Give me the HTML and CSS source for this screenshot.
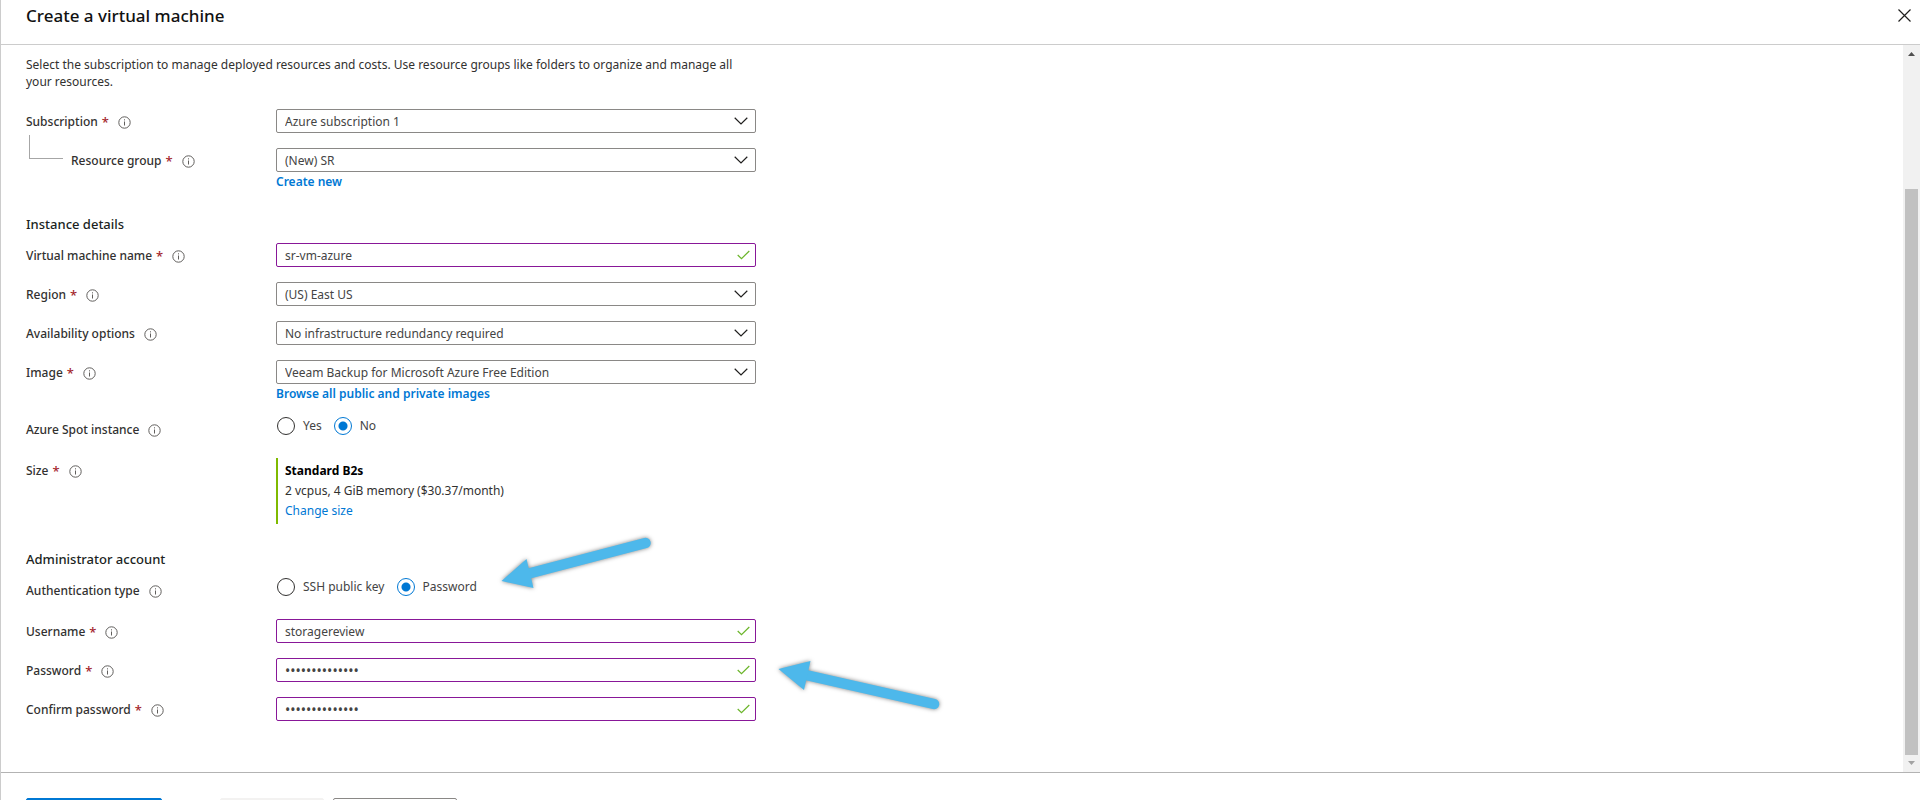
FILE: index.html
```html
<!DOCTYPE html>
<html lang="en">
<head>
<meta charset="utf-8">
<title>Create a virtual machine</title>
<link rel="stylesheet" href="styles.css">
</head>
<body>
<svg width="0" height="0" class="defs" aria-hidden="true">
  <symbol id="info" viewBox="0 0 13 13">
    <circle cx="6.500" cy="6.500" r="5.700" fill="none" stroke="#605e5c"/>
    <path d="M6.500 5.500v4M6.500 3.300v1.100" stroke="#605e5c" fill="none"/>
  </symbol>
  <symbol id="chevron" viewBox="0 0 14 8">
    <path d="M.7 .8L7 7L13.300 .8" fill="none" stroke="#201f1e" stroke-width="1.200"/>
  </symbol>
  <symbol id="tick" viewBox="0 0 13 10">
    <path d="M.7 5L4.500 8.600L12.300 1" fill="none" stroke="#6bb52a" stroke-width="1.200"/>
  </symbol>
</svg>
<div class="blade">
  <header class="header">
    <h1 class="title">Create a virtual machine</h1>
    <button class="close" type="button" aria-label="Close">
      <svg width="13" height="13" viewBox="0 0 13 13"><path d="M.5 .5l12 12M12.500 .5l-12 12" stroke="#201f1e" stroke-width="1.200"/></svg>
    </button>
  </header>

  <main class="main">
    <form class="form">
      <p class="intro">Select the subscription to manage deployed resources and costs. Use resource groups like folders to organize and manage all your resources.</p>

      <div class="group">
        <div class="row">
          <label class="label" for="subscription">Subscription<span class="req">*</span><svg class="info"><use href="#info"/></svg></label>
          <div class="field"><select class="box" id="subscription"><option>Azure subscription 1</option></select><svg class="chevron"><use href="#chevron"/></svg></div>
        </div>
        <div class="row">
          <label class="label child" for="rg">Resource group<span class="req">*</span><svg class="info"><use href="#info"/></svg></label>
          <div class="control">
            <div class="field"><select class="box" id="rg"><option>(New) SR</option></select><svg class="chevron"><use href="#chevron"/></svg></div>
            <a class="link strong" href="#">Create new</a>
          </div>
        </div>
      </div>

      <h2 class="heading">Instance details</h2>
      <div class="group">
        <div class="row">
          <label class="label" for="vm">Virtual machine name<span class="req">*</span><svg class="info"><use href="#info"/></svg></label>
          <div class="field"><input class="box edited" id="vm" type="text" value="sr-vm-azure"><svg class="tick"><use href="#tick"/></svg></div>
        </div>
        <div class="row">
          <label class="label" for="region">Region<span class="req">*</span><svg class="info"><use href="#info"/></svg></label>
          <div class="field"><select class="box" id="region"><option>(US) East US</option></select><svg class="chevron"><use href="#chevron"/></svg></div>
        </div>
        <div class="row">
          <label class="label" for="avail">Availability options<svg class="info"><use href="#info"/></svg></label>
          <div class="field"><select class="box" id="avail"><option>No infrastructure redundancy required</option></select><svg class="chevron"><use href="#chevron"/></svg></div>
        </div>
        <div class="row">
          <label class="label" for="image">Image<span class="req">*</span><svg class="info"><use href="#info"/></svg></label>
          <div class="control">
            <div class="field"><select class="box" id="image"><option>Veeam Backup for Microsoft Azure Free Edition</option></select><svg class="chevron"><use href="#chevron"/></svg></div>
            <a class="link strong" href="#">Browse all public and private images</a>
          </div>
        </div>
      </div>

      <div class="row choice spot" role="radiogroup" aria-labelledby="spot-label">
        <span class="label" id="spot-label">Azure Spot instance<svg class="info"><use href="#info"/></svg></span>
        <div class="radios">
          <label class="option"><input class="radio" type="radio" name="spot">Yes</label>
          <label class="option"><input class="radio" type="radio" name="spot" checked>No</label>
        </div>
      </div>

      <div class="row">
        <span class="label">Size<span class="req">*</span><svg class="info"><use href="#info"/></svg></span>
        <div class="size">
          <strong class="size-name">Standard B2s</strong>
          <span>2 vcpus, 4 GiB memory ($30.37/month)</span>
          <a class="link" href="#">Change size</a>
        </div>
      </div>

      <h2 class="heading admin">Administrator account</h2>
      <div class="row choice" role="radiogroup" aria-labelledby="auth-label">
        <span class="label" id="auth-label">Authentication type<svg class="info"><use href="#info"/></svg></span>
        <div class="radios">
          <label class="option"><input class="radio" type="radio" name="auth">SSH public key</label>
          <label class="option"><input class="radio" type="radio" name="auth" checked>Password</label>
        </div>
      </div>
      <div class="group">
        <div class="row">
          <label class="label" for="user">Username<span class="req">*</span><svg class="info"><use href="#info"/></svg></label>
          <div class="field"><input class="box edited" id="user" type="text" value="storagereview"><svg class="tick"><use href="#tick"/></svg></div>
        </div>
        <div class="row">
          <label class="label" for="pw">Password<span class="req">*</span><svg class="info"><use href="#info"/></svg></label>
          <div class="field"><input class="box edited secret" id="pw" type="password" value="passwordpasswo"><svg class="tick"><use href="#tick"/></svg></div>
        </div>
        <div class="row">
          <label class="label" for="pw2">Confirm password<span class="req">*</span><svg class="info"><use href="#info"/></svg></label>
          <div class="field"><input class="box edited secret" id="pw2" type="password" value="passwordpasswo"><svg class="tick"><use href="#tick"/></svg></div>
        </div>
      </div>

      <svg class="arrow arrow-auth" width="170" height="70" viewBox="492 530 170 70" aria-hidden="true">
        <path d="M529 573.500L645.500 543" stroke="#4db8eb" stroke-width="10.500" stroke-linecap="round"/>
        <path d="M501.500 581L526.500 559L533.500 588Z" fill="#4db8eb"/>
      </svg>
      <svg class="arrow arrow-pw" width="180" height="70" viewBox="769 650 180 70" aria-hidden="true">
        <path d="M808 675.500L934 704" stroke="#4db8eb" stroke-width="10.500" stroke-linecap="round"/>
        <path d="M778.500 669L810.500 661L804 690Z" fill="#4db8eb"/>
      </svg>
    </form>
    <div class="scrollbar" aria-hidden="true">
      <svg class="scroll-arrow" viewBox="0 0 17 17"><path d="M5 11L8.500 7L12 11Z" fill="#505050"/></svg>
      <div class="scroll-above"></div>
      <div class="scroll-thumb"></div>
      <svg class="scroll-arrow" viewBox="0 0 17 17"><path d="M5 6L8.500 10L12 6Z" fill="#a3a3a3"/></svg>
    </div>
  </main>

  <footer class="footer">
    <button class="btn primary" type="button" aria-label="Review and create"></button>
    <button class="btn previous" type="button" aria-label="Previous" disabled></button>
    <button class="btn next" type="button" aria-label="Next"></button>
  </footer>
</div>
</body>
</html>
```

FILE: styles.css
```css
* {
  box-sizing: border-box;
}

body {
  margin: 0;
  background: #fff;
  color: #323130;
  font-family: "Noto Sans", "Open Sans", sans-serif;
  font-size: 12px;
  line-height: 20px;
}

.defs {
  position: absolute;
}

.blade {
  display: grid;
  grid-template-rows: auto 1fr auto;
  height: 100vh;
  overflow: hidden;
  border-left: 1px solid #ccc;
}

.header {
  display: flex;
  justify-content: space-between;
  align-items: flex-start;
  padding: 4px 9px 16px 25px;
  border-bottom: 1px solid #ccc;
}

.title {
  margin: 0;
  color: #111;
  font-size: 17px;
  font-weight: 500;
  line-height: 24px;
}

.close {
  display: flex;
  padding: 5px 0;
  border: 0;
  background: none;
}

.main {
  display: flex;
  min-height: 0;
}

.form {
  position: relative;
  flex: 1;
  padding: 11px 25px 0;
  overflow: hidden;
}

.intro {
  max-width: 730px;
  margin: 0 0 19px;
  line-height: 17px;
}

.group {
  display: flex;
  flex-direction: column;
  gap: 15px;
}

.row {
  display: grid;
  grid-template-columns: 250px minmax(0, 480px);
  align-items: start;
}

.label {
  display: flex;
  align-items: center;
  height: 24px;
  padding-top: 2px;
  font-weight: 500;
}

.req {
  margin-left: 4px;
  color: #a4262c;
  font-size: 13px;
}

.info {
  width: 13px;
  height: 13px;
  margin-left: 9px;
}

.child::before {
  content: "";
  align-self: flex-start;
  flex: none;
  width: 33px;
  height: 23px;
  margin: -15px 8px 0 3px;
  border: solid #a6a6a6;
  border-width: 0 0 1px 1px;
}

.control {
  display: flex;
  flex-direction: column;
  align-items: flex-start;
}

.field {
  position: relative;
  width: 100%;
}

.box {
  display: block;
  width: 100%;
  height: 24px;
  padding: 0 32px 0 8px;
  border: 1px solid #8a8886;
  border-radius: 2px;
  background: #fff;
  color: #444;
  font: inherit;
  appearance: none;
}

select.box {
  padding-top: 1px;
}

.edited {
  border-color: #881798;
}

.secret {
  font-size: 14px;
}

.chevron,
.tick {
  position: absolute;
  pointer-events: none;
}

.chevron {
  top: 8px;
  right: 8px;
  width: 14px;
  height: 8px;
}

.tick {
  top: 7px;
  right: 6px;
  width: 13px;
  height: 10px;
}

.link {
  color: #0078d4;
  text-decoration: none;
}

.strong {
  font-weight: 600;
}

.heading {
  margin: 22px 0 9px;
  color: #201f1e;
  font-size: 13px;
  font-weight: 500;
  line-height: 20px;
}

.admin {
  margin-top: 25px;
}

.choice {
  margin-bottom: 17px;
}

.spot {
  margin-top: 13px;
}

.radios {
  display: flex;
  gap: 12px;
  padding-left: 1px;
}

.option {
  display: flex;
  align-items: center;
  gap: 8px;
  height: 18px;
  color: #444;
}

.radio {
  width: 18px;
  height: 18px;
  margin: 0;
  border: 1px solid #323130;
  border-radius: 50%;
  background: #fff;
  appearance: none;
}

.radio:checked {
  border-color: #0078d4;
  background: radial-gradient(circle, #0078d4 4px, #fff 5px);
}

.size {
  display: flex;
  flex-direction: column;
  align-items: flex-start;
  padding: 3px 0 3px 7px;
  border-left: 2px solid #7fba00;
}

.size-name {
  color: #000;
  font-weight: 700;
}

.arrow {
  position: absolute;
  filter: drop-shadow(0 0 2px rgba(0, 0, 0, 0.5));
}

.arrow-auth {
  top: 485px;
  left: 491px;
}

.arrow-pw {
  top: 605px;
  left: 768px;
}

.scrollbar {
  display: flex;
  flex-direction: column;
  width: 17px;
  background: #f1f1f1;
}

.scroll-arrow {
  flex: none;
  width: 17px;
  height: 17px;
}

.scroll-above {
  flex: 127;
}

.scroll-thumb {
  flex: 566;
  margin: 0 2px;
  background: #c1c1c1;
}

.footer {
  display: flex;
  height: 28px;
  padding: 25px 25px 0;
  border-top: 1px solid #b3b3b3;
}

.btn {
  flex: none;
  height: 24px;
  padding: 0;
  border: 1px solid #8a8886;
  border-radius: 2px;
  background: #fff;
}

.primary {
  width: 136px;
  border-color: #0078d4;
  background: #0078d4;
}

.previous {
  width: 104px;
  margin: 0 9px 0 58px;
  border-color: #f3f2f1;
  background: #f3f2f1;
}

.next {
  width: 124px;
}
```
